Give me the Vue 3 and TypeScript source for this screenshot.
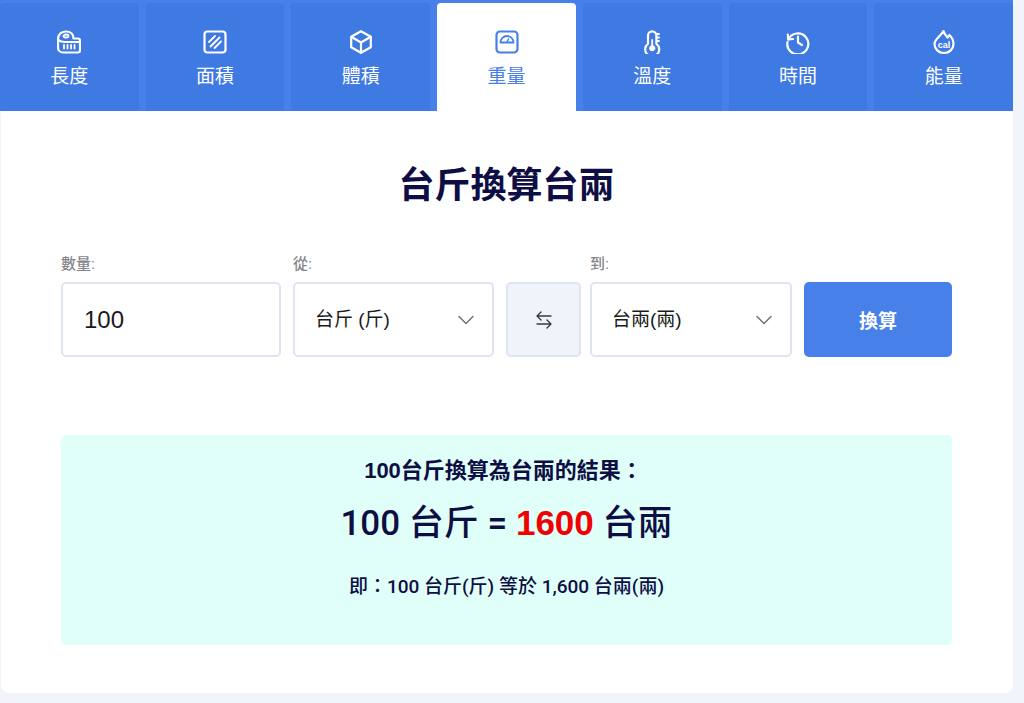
<script setup lang="ts">
import { ref } from 'vue'
const amount = ref('100')
const from = ref('tj')
const to = ref('tl')
const tabs = ['長度', '面積', '體積', '重量', '溫度', '時間', '能量']
</script>

<template>
  <div class="page">
    <nav class="tabs">
      <a v-for="(t, i) in tabs" :key="t" class="tab" :class="{ active: i === 3 }">
        <svg class="icon" viewBox="0 0 24 24" fill="none" stroke="currentColor" stroke-width="2.200" stroke-linecap="round" stroke-linejoin="round">
          <template v-if="i === 0">
            <path d="M1 12V9C1 4.500 4.500 1.500 9 1.500S16.500 4 16.500 8.500H21A2 2 0 0 1 23 10.500V20.500A2 2 0 0 1 21 22.500H6A5 5 0 0 1 1 17.500V12" />
            <ellipse cx="9" cy="6" rx="2.500" ry="1.500" stroke-width="1.800" />
            <path d="M1.500 10C3 11.500 5.500 12 8 12H23M7 15V18.500M10.500 15V18.500M14 15V18.500M17.500 15V18.500" stroke-width="1.800" />
          </template>
          <template v-else-if="i === 1">
            <rect x="1.500" y="1.500" width="21" height="21" rx="3" />
            <path d="M6 12L12 6M11.500 18L18 11.500M7.500 16.500L16.500 7.500" stroke-width="1.800" />
          </template>
          <template v-else-if="i === 2">
            <path d="M12 1.200L21.800 6.800V17.200L12 22.800L2.200 17.200V6.800Z" />
            <path d="M2.200 6.800L12 12.500L21.800 6.800M12 12.500V22.800" />
          </template>
          <template v-else-if="i === 3">
            <rect x="1.500" y="1.500" width="21" height="21" rx="3.500" />
            <path d="M5.500 12.500A6.500 6.500 0 0 1 18.500 12.500Z" stroke-width="1.800" />
            <path d="M12 12L13.500 9" stroke-width="1.500" />
          </template>
          <template v-else-if="i === 4">
            <path d="M8 13.800V5.500A4.200 4.200 0 0 1 16.400 5.500V13.800A7 7 0 1 1 8 13.800Z" />
            <circle cx="12.200" cy="18.200" r="2.600" fill="currentColor" stroke-width="1" />
            <path d="M12.200 16V10M17.500 4H19M17.500 7.500H19M17.500 11H19" stroke-width="1.800" />
          </template>
          <template v-else-if="i === 5">
            <path d="M2.300 9.500A10.500 10.500 0 1 1 1.500 12" />
            <path d="M1.800 4.500L2.300 9.500L7 9" />
            <path d="M12 6.500V12.500L16 15" />
          </template>
          <template v-else>
            <path d="M11.500 1C12.200 4 14.200 5.500 15.500 7.500L17.500 5C20 7.500 21.500 11 21.500 14A9.500 9 0 0 1 2.500 14C2.500 9 9 6 11.500 1Z" />
            <text x="12" y="18.200" text-anchor="middle" class="cal">cal</text>
          </template>
        </svg>
        <span>{{ t }}</span>
      </a>
    </nav>

    <main class="card">
      <h1>台斤換算台兩</h1>

      <form class="form" @submit.prevent>
        <label class="field amount">
          <span class="label">數量:</span>
          <input v-model="amount" class="control num" type="text" />
        </label>
        <label class="field unit">
          <span class="label">從:</span>
          <span class="select-wrap">
            <select v-model="from" class="control sel">
              <option value="tj">台斤 (斤)</option>
            </select>
            <svg class="chev" viewBox="0 0 16 10" fill="none" stroke="currentColor" stroke-width="1.400" stroke-linecap="round" stroke-linejoin="round"><path d="M1 1.500L8 8.500L15 1.500" /></svg>
          </span>
        </label>
        <button type="button" class="swap" aria-label="swap">
          <svg viewBox="0 0 18 18" fill="none" stroke="currentColor" stroke-width="1.400" stroke-linecap="round" stroke-linejoin="round"><path d="M16 5H2M6 1L2 5L6 9M2 13H16M12 9L16 13L12 17" /></svg>
        </button>
        <label class="field unit to">
          <span class="label">到:</span>
          <span class="select-wrap">
            <select v-model="to" class="control sel">
              <option value="tl">台兩(兩)</option>
            </select>
            <svg class="chev" viewBox="0 0 16 10" fill="none" stroke="currentColor" stroke-width="1.400" stroke-linecap="round" stroke-linejoin="round"><path d="M1 1.500L8 8.500L15 1.500" /></svg>
          </span>
        </label>
        <button type="submit" class="go">換算</button>
      </form>

      <section class="result">
        <h2>100台斤換算為台兩的結果：</h2>
        <p class="main">100 台斤 = <strong>1600</strong> 台兩</p>
        <p class="note">即：100 台斤(斤) 等於 1,600 台兩(兩)</p>
      </section>
    </main>
  </div>
</template>

<style>
html, body { margin: 0; background: #f1f4fb; }
</style>

<style scoped>
.page {
  width: 1024px;
  height: 703px;
  overflow: hidden;
  background: #f1f4fb;
  font-family: "Liberation Sans", "Noto Sans CJK TC", sans-serif;
  color: #0e0e45;
}
.tabs {
  display: flex;
  gap: 7px;
  width: 1013px;
  height: 111px;
  box-sizing: border-box;
  padding-top: 3px;
  background: #4780e9;
}
.tab {
  flex: 1;
  display: flex;
  flex-direction: column;
  align-items: center;
  padding-top: 27px;
  box-sizing: border-box;
  background: #3f79e2;
  border-radius: 4px 4px 0 0;
  color: #fff;
  font-size: 19px;
  line-height: 26px;
}
.tab.active { background: #fff; color: #4780e9; }
.icon { width: 24px; height: 24px; margin-bottom: 10px; }
.cal { font: 700 9px "Liberation Sans", sans-serif; fill: currentColor; stroke: none; }
.card {
  width: 1012px;
  height: 582px;
  margin-left: 1px;
  box-sizing: border-box;
  padding: 0 61px 0 60px;
  background: #fff;
  border-radius: 0 0 8px 8px;
  display: flow-root;
}
h1 {
  margin: 52px 0 0;
  text-align: center;
  font-size: 36px;
  line-height: 46px;
  font-weight: 700;
}
.form {
  display: flex;
  align-items: flex-end;
  margin-top: 45px;
}
.field { display: flex; flex-direction: column; gap: 8px; }
.label { font-size: 15px; line-height: 20px; color: #85858b; font-weight: 500; }
.amount { width: 220px; margin-right: 12px; }
.unit { width: 201px; margin-right: 12px; }
.to { width: 202px; margin-right: 12px; }
.control {
  display: block;
  width: 100%;
  height: 75px;
  box-sizing: border-box;
  border: 2px solid #dfe4f2;
  border-radius: 5px;
  background: #fff;
  font-family: inherit;
  color: #1a1a1a;
  outline: none;
}
.num { padding: 0 21px; font-size: 24px; }
.sel { padding: 0 20px; font-size: 19px; appearance: none; }
.select-wrap { position: relative; display: block; }
.chev {
  position: absolute;
  right: 20px;
  top: 33px;
  width: 16px;
  height: 10px;
  color: #6e6e6e;
  pointer-events: none;
}
.swap {
  width: 75px;
  height: 75px;
  margin-right: 9px;
  padding: 0;
  display: flex;
  align-items: center;
  justify-content: center;
  box-sizing: border-box;
  border: 2px solid #dfe4f2;
  border-radius: 5px;
  background: #eff3fa;
  color: #3c3c3c;
}
.swap svg { width: 18px; height: 18px; }
.go {
  width: 148px;
  height: 75px;
  border: 0;
  border-radius: 5px;
  background: #4780e9;
  color: #fff;
  font-family: inherit;
  font-size: 19px;
  font-weight: 700;
}
.result {
  height: 210px;
  margin-top: 78px;
  box-sizing: border-box;
  padding-top: 22px;
  background: #e0fff8;
  border-radius: 5px;
  text-align: center;
}
h2 {
  margin: 0 6px 0 0;
  font-size: 22px;
  line-height: 28px;
  font-weight: 700;
}
.main {
  margin: 16px 0 0;
  font-family: Roboto, "Noto Sans CJK TC", sans-serif;
  font-size: 35px;
  line-height: 44px;
  font-weight: 500;
}
.main strong { color: #f00000; font-family: "Liberation Sans", sans-serif; font-weight: 700; }
.note {
  margin: 28px 0 0;
  font-family: Roboto, "Noto Sans CJK TC", sans-serif;
  font-size: 19px;
  line-height: 26px;
  font-weight: 500;
}
</style>
